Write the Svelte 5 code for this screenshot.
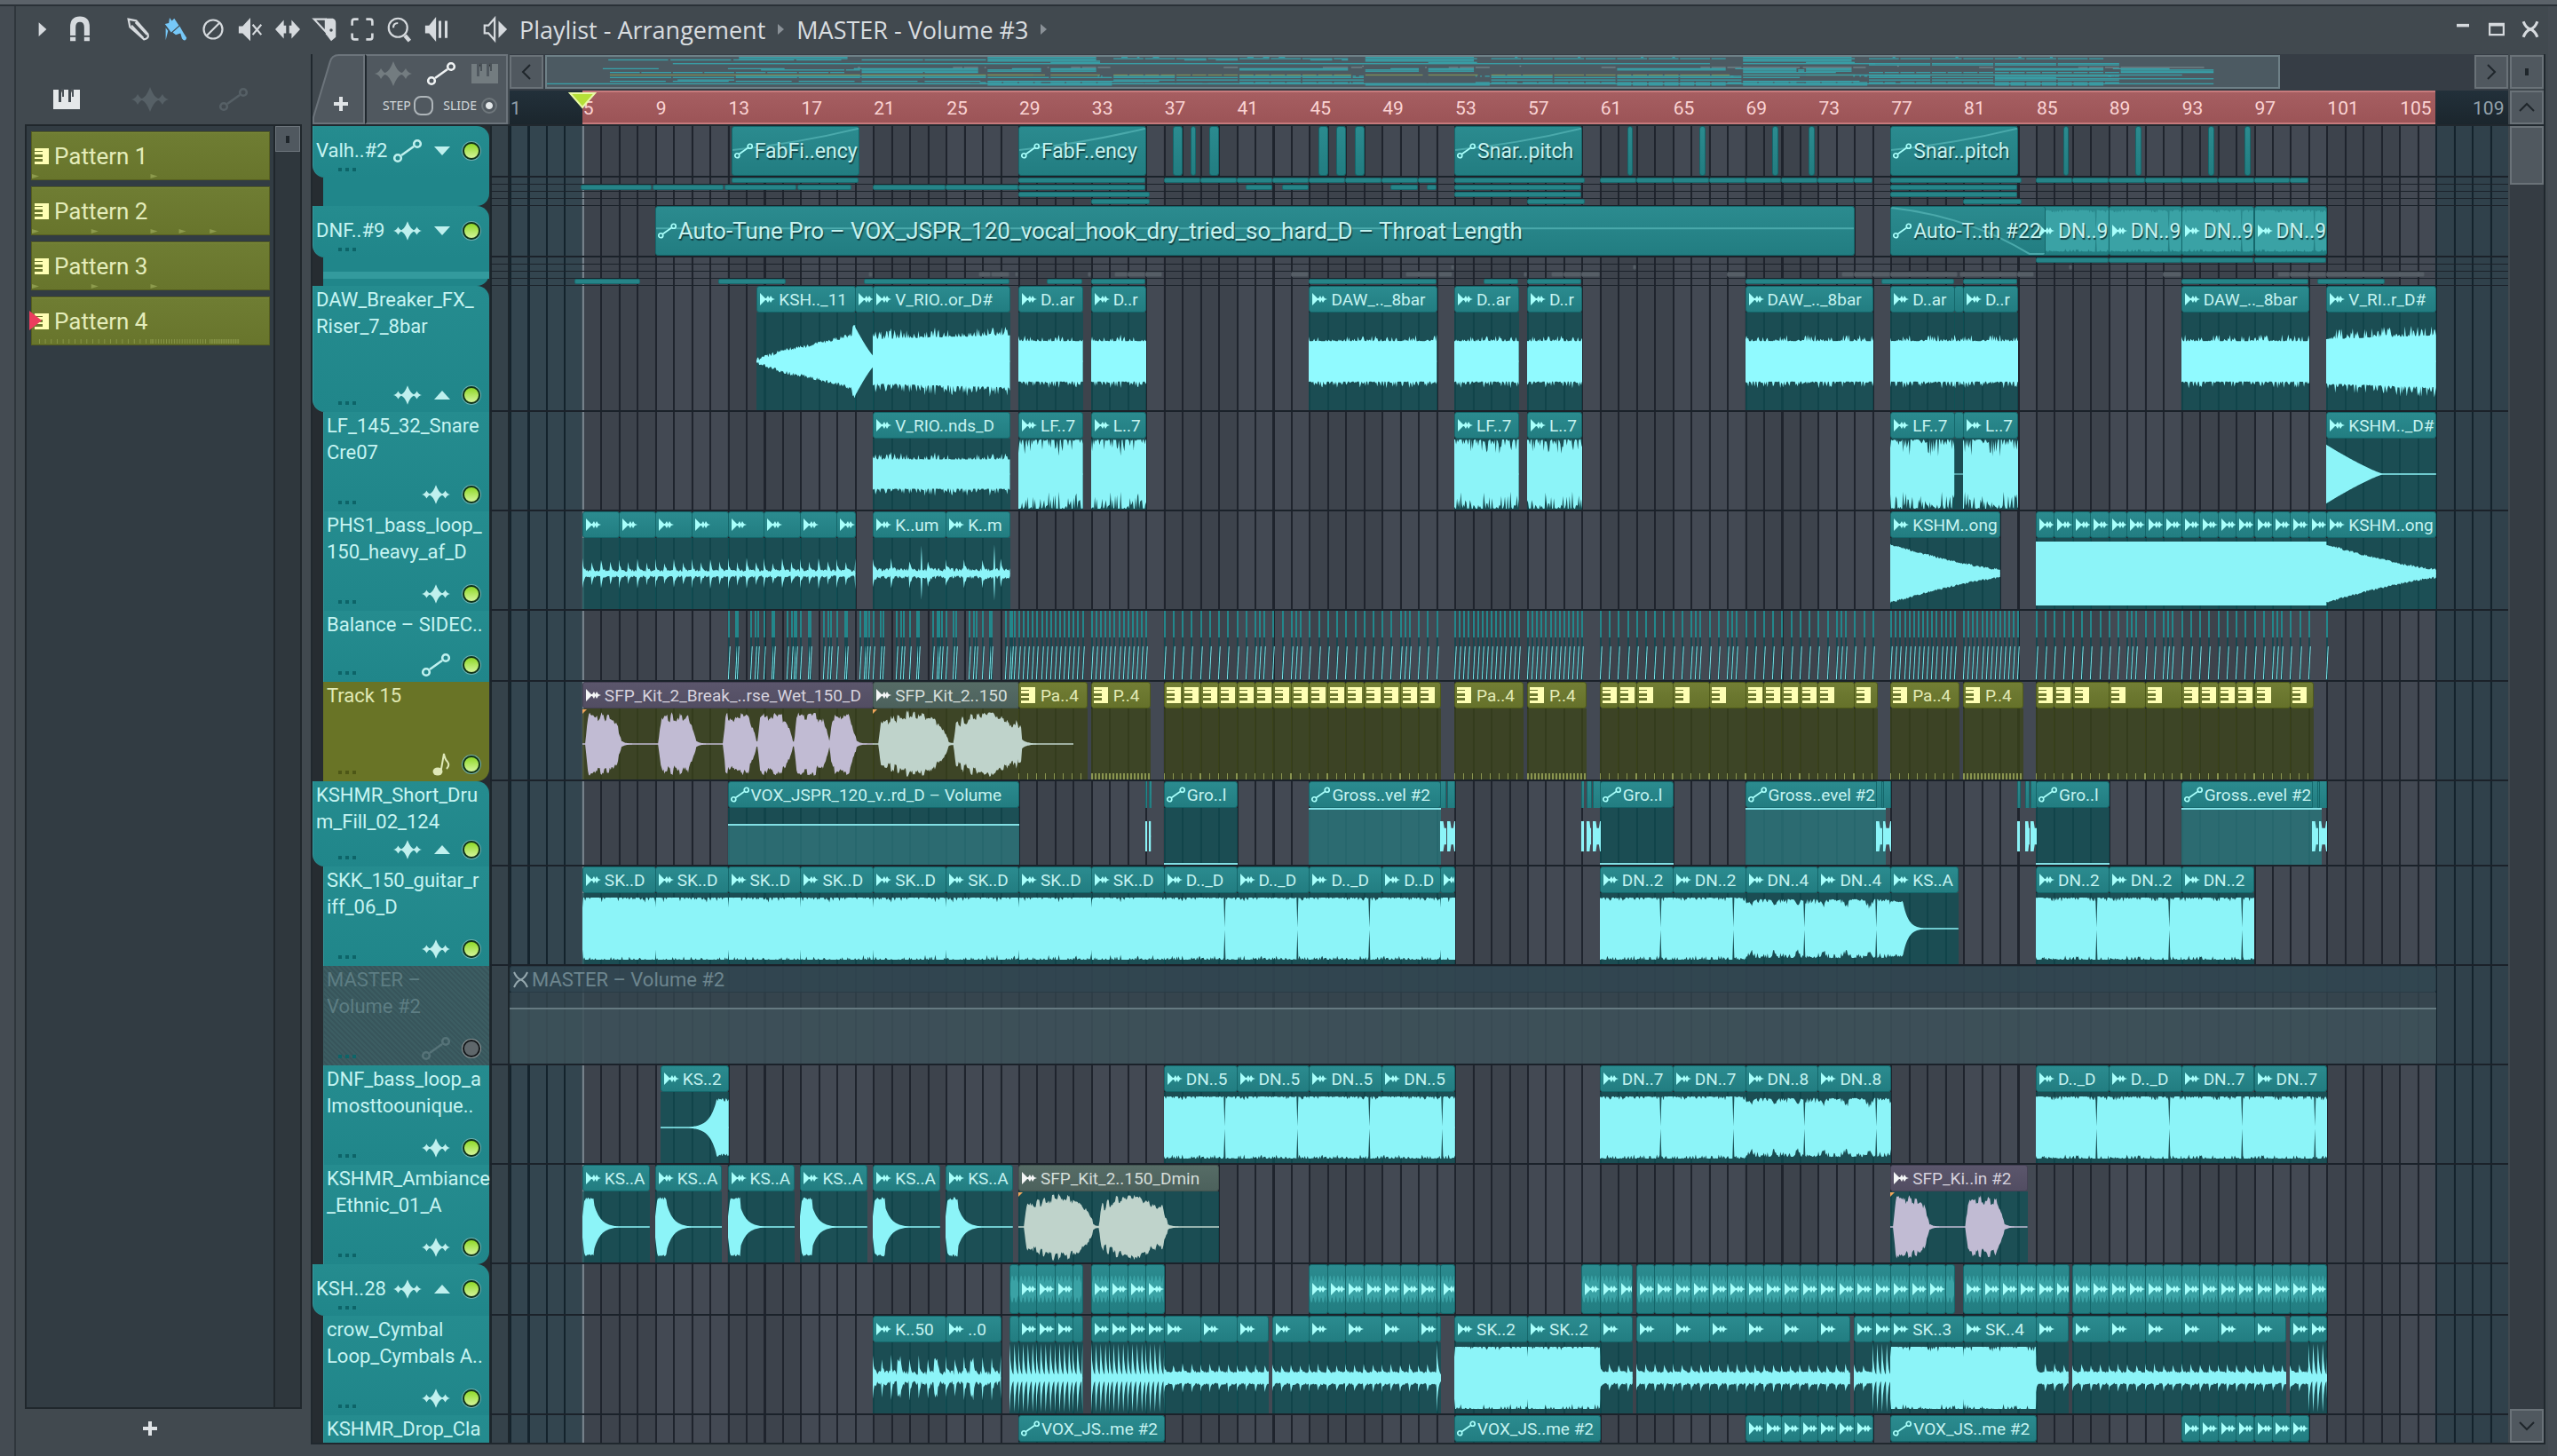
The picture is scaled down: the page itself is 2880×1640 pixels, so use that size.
<script>
  const BARS = 110;
  const pct = (n) => `${(n / BARS) * 100}%`;
  const frac = (n) => n - Math.floor(n);
  const rnd = (n) => frac(Math.sin(n * 127.1 + 311.7) * 43758.5453);

  const blob = (t, a, b) => {
    if (t < a) return 0;
    if (t > b) return 0.12 * Math.exp(-(t - b) * 5);
    return Math.min(1, (t - a) * 6, (b - t) * 2 + 0.25);
  };
  const grain = (t, n, base) => base + 0.22 * rnd(Math.floor(t * 6) + 7) + 0.1 * rnd(n);

  function level(kind, t, len, n) {
    const r = rnd(n);
    const p = t / len;
    switch (kind) {
      case 'mid': return 0.42 + r ** 4 * 0.14;
      case 'big': return 0.46 + p * 0.08 + r ** 3 * 0.22;
      case 'low': return 0.42 + r ** 4 * 0.22;
      case 'rise': return Math.min(0.8, p * 3) * 0.18 + 0.4 * p ** 1.6 + r * 0.08 + (p > 0.97 ? 0.16 : 0);
      case 'fall': return 0.62 * (1 - p) ** 1.2 + 0.1;
      case 'tall': return 1 - r ** 4 * 0.5;
      case 'fade': return 0.72 * (1 - p) ** 1.3 + 0.09 + r * 0.06;
      case 'drop': return Math.max(0.015, 0.85 * Math.max(0, 1 - p * 1.9) ** 1.2);
      case 'beat': return 0.05 + r * 0.07 + 0.34 * Math.exp(-frac(t) * 16) + 0.24 * Math.exp(-frac(t + 0.5) * 16);
      case 'thump': return 0.06 + r * 0.1 + 0.28 * Math.exp(-frac(t) * 14) + (Math.abs(t - 2.65) < 0.04 ? 0.7 : 0);
      case 'solid': return 0.92;
      case 'guitar': return frac(t / 4) < 0.01 ? 0.6 : 0.9 - r ** 8 * 0.15;
      case 'loop': return Math.abs(t - 3.3) < 0.03 ? 0.03 : 0.9 - r ** 4 * 0.12;
      case 'wavy': return Math.abs(t - 3.2) < 0.03 ? 0.03 : 0.85 - r ** 3 * 0.15 - 0.14 * Math.max(0, Math.sin(t * 5)) ** 4;
      case 'tail': return t < 0.7 ? 0.82 - r * 0.08 : Math.max(0.012, 0.75 * Math.exp(-(t - 0.7) * 3.5));
      case 'hit': return t < 0.12 ? 0.3 + t * 4.5 : t < 0.65 ? 0.86 - r * 0.08 : Math.max(0.012, 0.62 * Math.exp(-(t - 0.65) * 2.8));
      case 'swell': return t > 3 ? 0.85 - r * 0.1 : Math.max(0.012, 0.8 * Math.exp((t - 3.05) * 2.6));
      case 'kick': return 0.14 + r * 0.06 + 0.22 * Math.exp(-frac(t * 2) * 8);
      case 'spike': return 0.04 + 0.95 * Math.exp(-frac(t * 4) * 3.6);
      case 'hats': return 0.08 + r * 0.14 + 0.45 * Math.exp(-frac(t * 2) * 9) + (Math.abs(frac(t / 2) - 0.7) < 0.04 ? 0.35 : 0);
      case 'ghost': return 0.25 + 0.35 * Math.abs(Math.sin(t * 14));
      case 'voxA': return 0.012 + grain(t, n, 0.6) * Math.max(blob(t, 0.15, 2.1), blob(t, 4.15, 6.2), blob(t, 7.7, 9.5), blob(t, 9.6, 11.5), blob(t, 11.6, 13.5), blob(t, 13.55, 15));
      case 'voxB': return 0.012 + (grain(t, n, 0.55) + 0.14 * Math.sin(t * 1.6 - 2)) * Math.max(blob(t, 0.3, 4.1), blob(t, 4.4, 8.2));
      case 'voxC': return 0.012 + grain(t, n, 0.6) * Math.max(blob(t, 0.15, 2.1), blob(t, 4.1, 6.2));
      case 'voxEnd': return t < 0.2 ? 0.55 - r * 0.1 : 0.012 + 0.12 * Math.exp(-(t - 0.2) * 4);
      case 'burst': return frac(t * 3) < 0.45 ? 0.55 : 0.3;
      default: return 0;
    }
  }

  function wavePath(kind, start, len) {
    const steps = Math.max(6, Math.round(len * 20));
    const top = [];
    const bottom = [];
    for (let i = 0; i <= steps; i++) {
      const t = (i / steps) * len;
      const up = level(kind, t, len, i + start * 3);
      const down = level(kind, t, len, i + start * 3 + 991);
      top.push(`${i} ${(50 - up * 50).toFixed(1)}`);
      bottom.unshift(`${i} ${(50 + down * 50).toFixed(1)}`);
    }
    return { steps, d: `M${top.join('L')}L${bottom.join('L')}Z` };
  }

  // clip: start bar, end bar, label, waveform kind, extra options
  const c = (s, e, label = '', wave = '', opt = {}) => ({ s, e, label, wave, icon: 'clip', tone: 'teal', ...opt });
  const auto = (s, e, label, fill, opt = {}) => c(s, e, label, '', { icon: 'auto', fill, ...opt });
  const run = (s, e, step, label, wave, opt) => {
    const out = [];
    for (let b = s; b < e - 0.01; b += step) out.push(c(b, Math.min(b + step, e), label, wave, opt));
    return out;
  };
  const bare = (...pairs) => pairs.map(([s, e]) => ({ s, e }));
  const steps = (s, e, n = 2) => {
    const out = [];
    for (let b = s; b < e; b += n) out.push({ s: b, e: Math.min(b + n, e) });
    return out;
  };
  const pat = (s, e, label = '') => c(s, e, label, '', { icon: 'piano', tone: 'olive', notes: true });
  const pats = (...edges) => edges.slice(1).map((e, i) => pat(edges[i], e));

  const valhTicks = [[37.5, 38], [38.5, 38.75], [39.5, 40], [45.5, 46], [46.5, 47], [47.5, 48]]
    .concat([62.5, 66.5, 70.5, 72.5, 86.5, 90.5, 94.5, 96.5].map((b) => [b, b + 0.28]));

  const sidechain = [];
  for (const base of [13, 17, 21, 25])
    for (const o of [0, 0.4, 0.52, 1.25, 1.5, 1.65, 2, 2.4, 2.5, 3.25, 3.5, 3.62, 3.75])
      if (base + o < 28.8) sidechain.push(base + o);
  for (const base of [29, 53, 77]) {
    for (let o = 0; o <= 3.6; o += 0.25) sidechain.push(base + o);
    for (let o = 4; o <= 7.1; o += 0.25) sidechain.push(base + o);
  }
  for (const base of [37, 61, 85]) {
    for (let o = 0; o < 15.3; o += 0.5) sidechain.push(base + o);
    for (const o of [5.25, 7.25, 13.25]) sidechain.push(base + o);
  }
  sidechain.push(101);

  const tracks = [
    {
      name: 'Valh..#2', h: 58, kind: 'auto', parent: true, caret: 'down', compact: true, rt: true, rb: true,
      clips: [
        auto(13.2, 20.2, 'FabFi..ency', null, { ramp: true }), auto(29, 36, 'FabF..ency', null, { ramp: true }),
        auto(53, 60, 'Snar..pitch', null, { ramp: true }), auto(77, 84, 'Snar..pitch', null, { ramp: true }),
        ...valhTicks.map(([s, e]) => c(s, e, '', '', { icon: '' })),
      ],
      minis: [
        [...bare([13.2, 20.2], [29, 36]), ...steps(37, 52), ...bare([53, 60.2]), ...steps(61, 76), ...bare([77, 84.2]), ...steps(85, 100)],
        bare([4.9, 8.8], [8.85, 12.8], [12.85, 16.8], [16.85, 19.8], [21, 25], [25, 29], [29, 36], [41.5, 43], [43.5, 45], [49.5, 51], [51.5, 52], [53, 60], [77, 84]),
        bare([29, 36.25], [53, 60], [77, 84]),
        bare([33, 36.25], [57, 60.2], [81, 84.2]),
      ],
    },
    {
      name: 'DNF..#9', h: 58, kind: 'wave', parent: true, caret: 'down', compact: true, rt: true, rb: true, stripe: true,
      clips: [
        auto(9, 75, 'Auto-Tune Pro – VOX_JSPR_120_vocal_hook_dry_tried_so_hard_D – Throat Length', null, { flat: true }),
        c(85, 89, 'DN..9', 'loop'), c(89, 93, 'DN..9', 'loop'), c(93, 97, 'DN..9', 'loop'), c(97, 101, 'DN..9', 'loop'),
        auto(77, 85.5, 'Auto-T..th #22', null, { fall: true }),
      ],
      minis: [
        steps(85, 101, 4),
        bare([52.8, 53], [62.8, 63], [86.8, 87]).map((m) => ({ ...m, grey: true })),
        bare([20.75, 21], [26.8, 27.5], [27.5, 28.5], [28.8, 29], [32.8, 33], [34.3, 35], [35, 36], [36, 36.9], [44, 45], [50.3, 52], [52.1, 52.9], [56.8, 57], [58.3, 59], [59, 60], [60, 61], [68, 69], [74.3, 75], [75, 76], [76, 77], [77, 80.7], [80.8, 84], [84, 84.9], [92, 93], [98.3, 99], [99, 100], [100, 101], [101, 106.4]).map((m) => ({ ...m, grey: true })),
        bare([4.55, 8.2], [12.5, 16.2], [20.5, 28.5], [30.55, 32.5], [33, 36], [45, 52], [54.6, 56.5], [57, 60], [69, 76], [76.5, 80.5], [81, 84], [93, 100], [100.5, 104.2]),
      ],
    },
    {
      name: 'DAW_Breaker_FX_\nRiser_7_8bar', h: 142, kind: 'wave', parent: true, caret: 'up', rt: true,
      clips: [
        c(14.6, 20, 'KSH.._11', 'rise'), c(20, 21, '', 'fall'), c(21, 28.5, 'V_RIO..or_D#', 'big'),
        c(29, 32.5, 'D..ar', 'mid'), c(33, 36, 'D..r', 'mid'), c(45, 52, 'DAW_.._8bar', 'mid'),
        c(53, 56.5, 'D..ar', 'mid'), c(57, 60, 'D..r', 'mid'), c(69, 76, 'DAW_.._8bar', 'mid'),
        c(77, 80.5, 'D..ar', 'mid'), c(80.5, 81, '', 'mid', { icon: '' }), c(81, 84, 'D..r', 'mid'),
        c(93, 100, 'DAW_.._8bar', 'mid'), c(101, 107, 'V_RI..r_D#', 'big'),
      ],
    },
    {
      name: 'LF_145_32_Snare\nCre07', h: 112, kind: 'wave',
      clips: [
        c(21, 28.5, 'V_RIO..nds_D', 'low'), c(29, 32.5, 'LF..7', 'tall'), c(33, 36, 'L..7', 'tall'),
        c(53, 56.5, 'LF..7', 'tall'), c(57, 60, 'L..7', 'tall'), c(77, 80.5, 'LF..7', 'tall'),
        c(80.5, 81, '', 'line', { icon: '' }), c(81, 84, 'L..7', 'tall'), c(101, 107, 'KSHM.._D#', 'drop'),
      ],
    },
    {
      name: 'PHS1_bass_loop_\n150_heavy_af_D', h: 112, kind: 'wave',
      clips: [
        ...run(5, 20, 2, '', 'beat'), c(21, 25, 'K..um', 'thump'), c(25, 28.5, 'K..m', 'thump'),
        c(77, 83, 'KSHM..ong', 'fade'), ...run(85, 101, 1, '', 'solid'), c(101, 107, 'KSHM..ong', 'fade'),
      ],
    },
    { name: 'Balance – SIDEC..', h: 80, kind: 'auto', clips: [], ticks: sidechain },
    {
      name: 'Track 15', h: 112, kind: 'note', olive: true, rb: true,
      clips: [
        c(5, 21, 'SFP_Kit_2_Break_..rse_Wet_150_D', 'voxA', { tone: 'plum', body: 'olive', mark: true }),
        c(21, 29, 'SFP_Kit_2..150', 'voxB', { tone: 'sage', body: 'olive', mark: true }),
        pat(29, 32.75, 'Pa..4'), pat(33, 36.25, 'P..4'),
        c(29, 32, '', 'voxEnd', { icon: '', tone: 'sage', over: true }),
        ...pats(37, 38, 39, 40, 41, 42, 43, 44, 45, 46, 47, 48, 49, 50, 51, 52.2),
        pat(53, 56.75, 'Pa..4'), pat(57, 60.25, 'P..4'),
        ...pats(61, 62, 63, 65, 67, 69, 70, 71, 72, 73, 75, 76.25),
        pat(77, 80.75, 'Pa..4'), pat(81, 84.25, 'P..4'),
        ...pats(85, 86, 87, 89, 91, 93, 94, 95, 96, 97, 99, 100.25),
      ],
    },
    {
      name: 'KSHMR_Short_Dru\nm_Fill_02_124', h: 96, kind: 'wave', parent: true, caret: 'up', rt: true,
      clips: [
        auto(13, 29, 'VOX_JSPR_120_v..rd_D – Volume', 72),
        auto(37, 41, 'Gro..l', 0), auto(45, 52.2, 'Gross..vel #2', 100), auto(61, 65, 'Gro..l', 0),
        auto(69, 76.7, 'Gross..evel #2', 100), auto(85, 89, 'Gro..l', 0), auto(93, 100.7, 'Gross..evel #2', 100),
        ...[[36, 36.05], [36.2, 36.26], [52.2, 52.5], [52.6, 53], [60, 60.1], [60.3, 60.5], [60.6, 61], [76.2, 76.5], [76.6, 77], [84, 84.1], [84.4, 84.6], [84.7, 85], [100.2, 100.5], [100.6, 101]].map(([s, e]) => c(s, e, '', 'burst', { icon: '', thin: true })),
      ],
    },
    {
      name: 'SKK_150_guitar_r\niff_06_D', h: 112, kind: 'wave',
      clips: [
        ...run(5, 37, 4, 'SK..D', 'guitar'), ...run(37, 49, 4, 'D.._D', 'loop'), c(49, 52.2, 'D..D', 'loop'), c(52.2, 53, '', 'guitar'),
        c(61, 65, 'DN..2', 'loop'), c(65, 69, 'DN..2', 'loop'), c(69, 73, 'DN..4', 'wavy'), c(73, 77, 'DN..4', 'wavy'),
        c(77, 80.7, 'KS..A', 'tail'), ...run(85, 97, 4, 'DN..2', 'loop'),
      ],
    },
    { name: 'MASTER –\nVolume #2', h: 112, kind: 'auto', muted: true, clips: [c(1, 107, 'MASTER – Volume #2', '', { icon: 'cross', tone: 'mute', fill: 79 })] },
    {
      name: 'DNF_bass_loop_a\nlmosttoounique..', h: 112, kind: 'wave',
      clips: [
        c(9.3, 13, 'KS..2', 'swell'), ...run(37, 53, 4, 'DN..5', 'loop'), ...run(61, 69, 4, 'DN..7', 'loop'),
        ...run(69, 77, 4, 'DN..8', 'wavy'), ...run(85, 93, 4, 'D.._D', 'loop'), ...run(93, 101, 4, 'DN..7', 'loop'),
      ],
    },
    {
      name: 'KSHMR_Ambiance\n_Ethnic_01_A', h: 112, kind: 'wave', rb: true,
      clips: [
        ...[5, 9, 13, 17, 21, 25].map((b) => c(b, b + 3.65, 'KS..A', 'hit')),
        c(29, 40, 'SFP_Kit_2..150_Dmin', 'voxB', { tone: 'sage', mark: true }),
        c(77, 84.5, 'SFP_Ki..in #2', 'voxC', { tone: 'plum', mark: true }),
      ],
    },
    {
      name: 'KSH..28', h: 58, kind: 'wave', parent: true, caret: 'up', compact: true, rt: true,
      clips: [
        c(28.5, 29, '', 'ghost', { icon: '' }), ...run(29, 32, 1, '', 'ghost'), c(32, 32.5, '', 'ghost', { icon: '' }),
        ...run(33, 37, 1, '', 'ghost'), ...run(45, 52, 1, '', 'ghost'), c(52, 52.2, '', 'ghost', { icon: '' }), c(52.2, 53, '', 'ghost'),
        ...run(60, 62.75, 1, '', 'ghost'), ...run(63, 80, 1, '', 'ghost'), c(80, 80.5, '', 'ghost', { icon: '' }),
        ...run(81, 86.8, 1, '', 'ghost'), ...run(87, 101, 1, '', 'ghost'),
      ],
    },
    {
      name: 'crow_Cymbal\nLoop_Cymbals A..', h: 112, kind: 'wave',
      clips: [
        c(21, 25, 'K..50', 'hats'), c(25, 28, '..0', 'hats'), c(28.5, 29, '', 'spike', { icon: '' }), ...run(29, 32, 1, '', 'spike'), c(32, 32.5, '', 'spike', { icon: '' }),
        ...run(33, 37, 1, '', 'spike'), ...run(37, 42.75, 2, '', 'kick'), ...run(43, 51, 2, '', 'kick'), c(51, 52, '', 'kick'), c(52, 52.2, '', 'spike', { icon: '' }),
        ...run(53, 61, 4, 'SK..2', 'guitar'), c(61, 62.75, '', 'kick'), ...run(63, 74.75, 2, '', 'kick'),
        c(75, 76, '', 'kick'), c(76, 77, '', 'spike'), c(77, 81, 'SK..3', 'guitar'), c(81, 85, 'SK..4', 'guitar'),
        c(85, 86.75, '', 'kick'), ...run(87, 98.75, 2, '', 'kick'), c(99, 100, '', 'kick'), c(100, 101, '', 'spike'),
      ],
    },
    {
      name: 'KSHMR_Drop_Cla', h: 112, kind: 'wave', last: true,
      clips: [
        auto(29, 37, 'VOX_JS..me #2', 40), auto(53, 61, 'VOX_JS..me #2', 40), ...run(69, 76, 1, '', 'kick'),
        auto(77, 85, 'VOX_JS..me #2', 40), ...run(93, 100, 1, '', 'kick'),
      ],
    },
  ];

  const overview = [];
  let lane = 0;
  for (const t of tracks) {
    for (const k of t.clips) if (!t.muted) overview.push({ x: k.s - 1, w: k.e - k.s, y: lane, olive: t.olive });
    lane += 1;
    for (const m of t.minis ?? []) {
      for (const k of m) overview.push({ x: k.s - 1, w: k.e - k.s, y: lane, grey: k.grey });
      lane += 1;
    }
  }
  overview.push({ x: 76, w: 28, y: 14 }, { x: 92, w: 14, y: 17 }, { x: 0, w: 106, y: 21 });

  const ruler = Array.from({ length: 28 }, (_, i) => 1 + i * 4);
  const bars = Array.from({ length: BARS }, (_, i) => i);
  const patterns = [
    { name: 'Pattern 1', marks: [0, 50] },
    { name: 'Pattern 2', marks: [0, 25, 50, 62, 75] },
    { name: 'Pattern 3', marks: [0, 25, 50] },
    { name: 'Pattern 4', marks: [] },
  ];
  const tools = ['pencil', 'brush', 'ban', 'mute', 'slip', 'slice', 'select', 'zoom', 'play'];
  let active = $state(3);
</script>

{#snippet icon(name)}
  {#if name === 'wave'}
    <svg class="i-wave" viewBox="0 0 42 28"><path d="M0 14Q5 13 7 8Q10 13 12 13Q17 11 21 0Q25 11 30 13Q32 13 35 8Q37 13 42 14Q37 15 35 20Q32 15 30 15Q25 17 21 28Q17 17 12 15Q10 15 7 20Q5 15 0 14Z" fill="currentColor" /></svg>
  {:else if name === 'auto'}
    <svg class="i-auto" viewBox="0 0 32 26" fill="none" stroke="currentColor" stroke-width="2.6"><circle cx="5" cy="21" r="3.8" /><circle cx="27" cy="5" r="3.8" /><path d="M9 18L23 8" /></svg>
  {:else if name === 'piano'}
    <svg class="i-piano" viewBox="0 0 30 22"><path d="M0 0H6V14H9V0H17V14H20V0H30V22H0Z" fill="currentColor" /><path d="M9 0H11V8M20 0H22V8" stroke="#4a5258" stroke-width="2" /></svg>
  {:else if name === 'note'}
    <svg class="i-note" viewBox="0 0 20 26"><ellipse cx="6" cy="21" rx="5.5" ry="4.5" fill="currentColor" /><path d="M9.500 21L13 1Q14 7 17 10Q20 14 16 18" fill="none" stroke="currentColor" stroke-width="2" /></svg>
  {:else if name === 'clip'}
    <svg class="i-clip" viewBox="0 0 17 14"><path d="M0 0L6 6H7L9 3L10.500 6L12 3L14 6L17 7L14 8L12 11L10.500 8L9 11L7 8H6L0 14Z" fill="currentColor" /></svg>
  {:else if name === 'cross'}
    <svg class="i-clip" viewBox="0 0 17 17"><path d="M1 0Q4 7 8.500 8.500Q13 7 16 0M1 17Q4 10 8.500 8.500Q13 10 16 17" stroke="currentColor" stroke-width="2" fill="none" /></svg>
  {:else if name === 'keys'}
    <svg class="i-keys" viewBox="0 0 16 18"><path d="M0 0H16V18H0V15H9V12H0V10H9V7H0V4H9V3H0Z" fill="currentColor" /></svg>
  {/if}
{/snippet}

{#snippet toolIcon(name)}
  <svg class="i-tool" viewBox="0 0 32 32" fill="none" stroke="currentColor" stroke-width="2.5">
    {#if name === 'pencil'}
      <path d="M3 3L13 5L28 22Q30 28 23 29L5 13ZM7 11L22 27M12 7L27 23" />
    {:else if name === 'brush'}
      <path d="M8 1L11 5L14 2L20 11L10 20L2 9L7 8ZM12 20L21 12L25 19L30 27Q28 33 24 28L22 21L16 23Z" fill="currentColor" stroke="none" /><path d="M3 14V30L6 18" fill="currentColor" stroke="none" />
    {:else if name === 'ban'}
      <circle cx="16" cy="16" r="12" /><path d="M8 24L24 8" />
    {:else if name === 'mute'}
      <path d="M1 12H6L16 1V31L6 21H1Z" fill="currentColor" stroke="none" /><path d="M19 10L30 23M30 10L19 23" />
    {:else if name === 'slip'}
      <path d="M0 16L11 4V11H14V21H11V28ZM32 16L21 4V11H18V21H21V28Z" fill="currentColor" stroke="none" />
    {:else if name === 'slice'}
      <path d="M2 3L17 19V3Z" /><path d="M17 2H26Q30 3 30 8V26L24 31L17 22Z" fill="currentColor" stroke="none" /><circle cx="24" cy="17" r="2" fill="#41494f" stroke="none" />
    {:else if name === 'select'}
      <path d="M3 11V6Q3 3 6 3H11M21 3H26Q29 3 29 6V11M29 21V26Q29 29 26 29H21M11 29H6Q3 29 3 26V21" stroke-width="3" />
    {:else if name === 'zoom'}
      <circle cx="14" cy="14" r="12" /><path d="M23 24L29 31" stroke-width="5" /><path d="M8 14Q8 8 14 8" />
    {:else if name === 'play'}
      <path d="M1 11H6L15 0V32L6 21H1Z" fill="currentColor" stroke="none" /><path d="M20 5V27M28 5V27" stroke-width="3.5" />
    {:else if name === 'magnet'}
      <path d="M7 31V13Q7 3 16 3Q25 3 25 13V31" stroke-width="7" /><path d="M3 25H11M21 25H29" stroke="#41494f" stroke-width="2" />
    {:else if name === 'speaker'}
      <path d="M2 11H7L15 2V30L7 21H2Z" /><path d="M20 5L31 16L20 27Z" fill="currentColor" stroke="none" />
    {:else if name === 'caret'}
      <path d="M11 7L21 16L11 25Z" fill="currentColor" stroke="none" />
    {:else if name === 'minimize'}
      <path d="M8 11H24" stroke-width="4" />
    {:else if name === 'maximize'}
      <path d="M7 9H25V23H7Z" /><path d="M7 10H25" stroke-width="4" />
    {:else if name === 'close'}
      <path d="M7 6Q10 14 16 16Q22 14 25 6M7 26Q10 18 16 16Q22 18 25 26" stroke-width="3.5" />
    {/if}
  </svg>
{/snippet}

{#snippet wave(kind, s, len)}
  {@const w = wavePath(kind, s, len)}
  <svg class="wave" viewBox="0 0 {w.steps} 100" preserveAspectRatio="none">
    <path d={w.d} fill="currentColor" />
    <path d="M0 50H{w.steps}" stroke="currentColor" vector-effect="non-scaling-stroke" />
  </svg>
{/snippet}

<div class="window">
  <header class="toolbar">
    <button class="tool" aria-label="Menu">{@render toolIcon('caret')}</button>
    <button class="tool" aria-label="Snap">{@render toolIcon('magnet')}</button>
    <div class="tools">
      {#each tools as t}
        <button class="tool" class:on={t === 'brush'} aria-label={t}>{@render toolIcon(t)}</button>
      {/each}
    </div>
    <button class="tool" aria-label="Preview">{@render toolIcon('speaker')}</button>
    <nav class="crumbs">
      <a href="#playlist">Playlist - Arrangement</a><i></i>
      <a href="#master">MASTER - Volume #3</a><i></i>
    </nav>
    <div class="win">
      {#each ['minimize', 'maximize', 'close'] as b}<button aria-label={b}>{@render toolIcon(b)}</button>{/each}
    </div>
  </header>

  <div class="content">
    <aside class="picker">
      <div class="tabs">
        <button aria-label="Patterns" class="sel">{@render icon('piano')}</button>
        <button aria-label="Audio">{@render icon('wave')}</button>
        <button aria-label="Automation">{@render icon('auto')}</button>
      </div>
      <div class="picker-box">
        <div class="patterns">
          {#each patterns as p, i}
            <button class="pattern" class:active={active === i} onclick={() => (active = i)}>
              {@render icon('keys')}<span>{p.name}</span>
              <svg class="marks" viewBox="0 0 100 6" preserveAspectRatio="none">
                {#each p.marks as m}<path d="M{m} 0L{m + 3} 3L{m} 6Z" />{/each}
                {#if i === 3}{#each bars as b}<path d="M{b < 20 ? b * 2.5 + 3 : b < 42 ? 50 + (b - 20) * 1.1 : 75 + (b - 42) * 0.6} 0v6h.3v-6z" class:hide={b > 62} />{/each}{/if}
              </svg>
            </button>
          {/each}
        </div>
        <div class="picker-scroll"><button aria-label="Options"><b></b></button></div>
      </div>
      <button class="add" aria-label="Add pattern"><svg viewBox="0 0 16 16"><path d="M8 0V16M0 8H16" stroke="currentColor" stroke-width="4" /></svg></button>
    </aside>

    <section class="playlist">
      <div class="head-row">
        <div class="corner">
          <button class="add-track" aria-label="Add track">
            <svg class="tabshape" viewBox="0 0 60 80" preserveAspectRatio="none"><path d="M1 79V72L20 9Q22 1 30 1H59V79Z" fill="#50585f" stroke="#6c747b" stroke-width="2" /></svg>
            <svg class="plus" viewBox="0 0 16 16"><path d="M8 0V16M0 8H16" stroke="currentColor" stroke-width="4" /></svg>
          </button>
          <div class="modes">
            <div class="mode-icons">
              <button aria-label="Clips">{@render icon('wave')}</button>
              <button aria-label="Automation" class="sel">{@render icon('auto')}</button>
              <button aria-label="Patterns">{@render icon('piano')}</button>
            </div>
            <div class="mode-toggles">
              <label>STEP <input type="checkbox" /></label>
              <label>SLIDE <input type="radio" checked /></label>
            </div>
          </div>
        </div>
        <div class="time">
          <div class="mini-row">
            <button class="sq" aria-label="Scroll left"><svg viewBox="0 0 12 18"><path d="M10 1L2 9L10 17" /></svg></button>
            <div class="minimap">
              <div class="thumb">
                <svg viewBox="0 0 110 24" preserveAspectRatio="none">
                  {#each overview as o}<rect x={o.x} y={o.y} width={Math.max(0.1, o.w - 0.1)} height="0.9" class:olive={o.olive} class:grey={o.grey} />{/each}
                </svg>
              </div>
            </div>
            <button class="sq" aria-label="Scroll right"><svg viewBox="0 0 12 18"><path d="M2 1L10 9L2 17" /></svg></button>
          </div>
          <div class="ruler">
            <div class="loop" style:left={pct(4)} style:width={pct(102)}></div>
            {#each ruler as n}<span class:out={n < 5 || n > 106} style:left={pct(n - 1)}>{n}</span>{/each}
            <svg class="playhead" style:left={pct(4)} viewBox="0 0 32 20"><path d="M2 2H30L16 18Z" fill="#b5e038" stroke="#e9f9a8" stroke-width="2" /></svg>
          </div>
        </div>
        <div class="side-btns">
          <button class="sq" aria-label="Options"><b></b></button>
          <button class="sq" aria-label="Scroll up"><svg viewBox="0 0 18 12"><path d="M1 10L9 2L17 10" /></svg></button>
        </div>
      </div>

      <div class="tracks-wrap">
        <div class="tracks">
          <div class="grid-bg">
            <svg viewBox="0 0 110 1" preserveAspectRatio="none">
              {#each bars as b}
                <rect x={b} y="0" width="1.01" height="1" fill={b < 4 ? '#33454f' : b > 105 ? '#30414b' : Math.floor(b / 4) % 2 ? '#3d434c' : '#434953'} />
              {/each}
              {#each bars as b}<rect x={b} y="0" width="0.1" height="1" fill={b < 4 || b > 105 ? '#14232c' : '#1f242d'} shape-rendering="crispEdges" />{/each}
              <rect x="4" y="0" width="0.1" height="1" fill="#7b8790" />
            </svg>
          </div>
          {#each tracks as t}
            <div class="row">
              <div class="head" class:parent={t.parent} class:olive={t.olive} class:muted={t.muted} class:rt={t.rt} class:rb={t.rb}>
                <div class="plate" class:compact={t.compact} style:height="{t.h}px">
                  <span class="name">{t.name}</span>
                  <div class="ctl">
                    <button class="dots" aria-label="Track options"><b></b><b></b><b></b></button>
                    <span class="kind">{@render icon(t.kind)}</span>
                    {#if t.caret}<button class="caret {t.caret}" aria-label="Fold"></button>{/if}
                    <input class="led" type="checkbox" checked={!t.muted} aria-label="Enable {t.name}" />
                  </div>
                </div>
                {#if t.minis}<div class="rest">{#if t.stripe}<i></i>{/if}</div>{/if}
              </div>
              <div class="lanes">
                <div class="lane" class:last={t.last} style:height="{t.h}px">
                  <div class="field">
                    {#each t.clips as k}
                      <div
                        class="clip {k.tone} {k.body ? 'on-' + k.body : ''}"
                        class:full={t.compact}
                        class:long={k.flat}
                        class:thin={k.thin}
                        class:over={k.over}
                        class:bright={t.h > 140}
                        style:left={pct(k.s - 1)}
                        style:width="calc({pct(k.e - k.s)} + 1px)"
                      >
                        <div class="bar">
                          {#if k.icon}{@render icon(k.icon === 'piano' ? 'keys' : k.icon)}{/if}
                          {#if k.label}<span>{k.label}</span>{/if}
                          {#if t.compact && k.wave}<div class="under">{@render wave(k.wave, k.s, k.e - k.s)}</div>{/if}
                          {#if k.ramp || k.flat || k.fall}
                            <svg class="curve" viewBox="0 0 100 100" preserveAspectRatio="none"><path d={k.flat ? 'M0 45H100' : k.fall ? 'M0 2Q50 20 90 98H100' : 'M0 48Q50 35 100 3'} vector-effect="non-scaling-stroke" /></svg>
                          {/if}
                        </div>
                        {#if !t.compact}
                          <div class="body">
                            {#if k.wave}{@render wave(k.wave, k.s, k.e - k.s)}{/if}
                            {#if k.fill != null}<div class="fill" style:height="{k.fill}%"></div>{/if}
                            {#if k.mark}<i class="mark"></i>{/if}
                            {#if k.notes}<i class="notes" class:dense={k.label === 'P..4'}></i>{/if}
                          </div>
                        {/if}
                      </div>
                    {/each}
                    {#each t.ticks ?? [] as b}<i class="tick" style:left={pct(b - 1)}><svg viewBox="0 0 4 44" preserveAspectRatio="none"><path d="M0.500 43L3 0" /></svg></i>{/each}
                  </div>
                </div>
                {#each t.minis ?? [] as m}
                  <div class="mini">
                    <div class="field">
                      {#each m as k}<i class:grey={k.grey} style:left={pct(k.s - 1)} style:width={pct(k.e - k.s)}></i>{/each}
                    </div>
                  </div>
                {/each}
              </div>
            </div>
          {/each}
        </div>
        <div class="vscroll">
          <div class="vthumb"></div>
          <button class="sq" aria-label="Scroll down"><svg viewBox="0 0 18 12"><path d="M1 2L9 10L17 2" /></svg></button>
        </div>
      </div>
    </section>
  </div>
</div>

<style>
  :global(body) { background: #41494f; }
  .window {
    height: 100vh;
    box-sizing: border-box;
    display: flex;
    flex-direction: column;
    overflow: hidden;
    background: #41494f;
    border-top: 5px solid #5b6269;
    box-shadow: inset 0 2px 0 #2a3137, inset 16px 0 0 #444b52, inset 18px 0 0 #2f363c, inset -10px 0 0 #444b52;
    color: #dfe3e6;
    font: 24px Roboto, sans-serif;
  }
  button { border: 0; padding: 0; margin: 0; background: none; color: inherit; font: inherit; cursor: pointer; }
  svg { display: block; overflow: visible; }
  a { color: inherit; text-decoration: none; }

  .toolbar { display: flex; align-items: center; height: 56px; padding: 0 12px 0 27px; color: #d6dade; flex: none; }
  .tool { width: 42px; display: grid; place-items: center; }
  .tool.on { color: #76c8f8; }
  .tools { display: flex; margin: 0 24px; }
  .i-tool { width: 28px; height: 30px; }
  .crumbs { display: flex; align-items: center; gap: 14px; margin-left: 6px; font: 27px 'Open Sans', sans-serif; color: #d9dde0; }
  .crumbs i { border: 6px solid transparent; border-left: 7px solid #8a9197; border-right: 0; }
  .win { margin-left: auto; display: flex; gap: 6px; }
  .win button { width: 32px; }

  .content { flex: 1; display: flex; min-height: 0; gap: 10px; padding: 0 13px 13px 28px; }
  .picker { width: 312px; display: flex; flex-direction: column; flex: none; }
  .tabs { height: 79px; display: flex; align-items: center; padding: 23px 0 0 0; box-sizing: border-box; color: #566066; }
  .tabs button { width: 94px; display: grid; place-items: center; }
  .tabs .sel, .sel { color: #e4e8ea; }
  .i-wave { width: 42px; height: 28px; }
  .i-auto { width: 32px; height: 26px; }
  .i-piano { width: 30px; height: 22px; }
  .picker-box { flex: 1; display: flex; background: #323c43; border: 2px solid #20272c; box-sizing: border-box; }
  .patterns { flex: 1; display: flex; flex-direction: column; gap: 7px; padding: 6px 4px 0 5px; }
  .pattern {
    position: relative; height: 55px; display: flex; align-items: center; gap: 6px; padding-left: 3px; color: #e4ecba;
    background: linear-gradient(#6f7d33, #68752c); border: 1px solid #565f1f; box-shadow: inset 0 1px #7d8b3c; font-size: 26px;
  }
  .pattern .i-keys { color: #ffffb4; }
  .pattern.active::before { content: ''; position: absolute; left: -3px; top: 15px; border: 11px solid transparent; border-left: 14px solid #ec3d5e; border-right: 0; }
  .marks { position: absolute; left: 0; bottom: 1px; width: 100%; height: 5px; fill: #8d9b4d; }
  .hide { display: none; }
  .i-keys { width: 16px; height: 18px; flex: none; }
  .picker-scroll { width: 28px; background: #2f373d; border-left: 2px solid #20272c; }
  .picker-scroll button { width: 28px; height: 29px; background: #50585f; border: 1px solid #6c747b; display: grid; place-items: center; }
  button b { display: block; width: 4px; height: 8px; background: #1f262b; }
  .add { height: 40px; display: grid; place-items: center; margin-right: 30px; padding-top: 3px; box-sizing: border-box; }
  .add svg, .plus { width: 16px; height: 16px; }

  .playlist { flex: 1; min-width: 0; display: flex; flex-direction: column; border: 2px solid #20282e; border-top: 0; }
  .head-row { display: flex; height: 81px; flex: none; box-sizing: border-box; border-bottom: 2px solid #20282e; }
  .corner { width: 222px; display: flex; flex: none; }
  .add-track { position: relative; width: 59px; display: grid; place-items: center; padding: 32px 0 0 4px; box-sizing: border-box; }
  .add-track .plus { position: relative; }
  .tabshape { position: absolute; inset: 0; width: 100%; height: 100%; }
  .modes { flex: 1; background: #50585f; border: 2px solid #6c747b; border-left-color: #20282e; box-sizing: border-box; color: #737c80; margin-right: 2px; }
  .mode-icons { display: flex; height: 40px; align-items: center; justify-content: space-around; }
  .mode-icons .sel { color: #f0f3f4; }
  .mode-toggles { display: flex; justify-content: space-between; padding: 0 10px 0 18px; font: 14px/32px 'Noto Sans', sans-serif; color: #d4d9dc; }
  .mode-toggles label { display: flex; align-items: center; gap: 3px; }
  .mode-toggles input { appearance: none; margin: 0; width: 22px; height: 22px; border: 2px solid #aeb5b9; border-radius: 8px; box-sizing: border-box; }
  .mode-toggles input[type='radio'] { width: 18px; height: 18px; border-radius: 50%; border-color: #6f777c; background: radial-gradient(#e4e8ea 35%, transparent 45%); margin-left: 2px; }
  .time { flex: 1; min-width: 0; display: flex; flex-direction: column; }
  .mini-row { display: flex; height: 41px; background: #363d45; gap: 2px; padding-top: 1px; box-sizing: border-box; }
  .sq { width: 38px; height: 38px; flex: none; display: grid; place-items: center; background: #50585f; border: 2px solid #6a7278; box-sizing: border-box; }
  .sq svg { width: 12px; height: 18px; fill: none; stroke: #1f262b; stroke-width: 2; }
  .sq svg[viewBox='0 0 18 12'] { width: 18px; height: 12px; }
  .minimap { flex: 1; }
  .thumb { width: 90%; height: 38px; box-sizing: border-box; background: #4c5a62; border: 2px solid #6e8087; }
  .thumb svg { width: 100%; height: 100%; fill: #38a2aa; }
  .thumb .olive { fill: #7f9058; }
  .thumb .grey { fill: #75868c; }
  .ruler { position: relative; flex: 1; background: linear-gradient(#22303a, #1b262d); overflow: hidden; }
  .loop { position: absolute; top: 0; bottom: 0; background: linear-gradient(#a65e61, #9c5457); border: 2px solid #c67a7c; border-width: 2px 0; box-sizing: border-box; }
  .ruler span { position: absolute; top: 7px; padding-left: 1px; font-size: 21px; line-height: 26px; color: #fbd3d3; }
  .ruler .out { color: #93a1aa; }
  .playhead { position: absolute; top: 1px; width: 32px; height: 20px; margin-left: -16px; }
  .side-btns { width: 40px; display: flex; flex-direction: column; gap: 2px; padding: 1px 0 0 2px; box-sizing: border-box; }

  .tracks-wrap { flex: 1; min-height: 0; display: flex; }
  .tracks { flex: 1; min-width: 0; position: relative; overflow: hidden; background: #262d33; }
  .vscroll { width: 38px; margin-left: 2px; display: flex; flex-direction: column; justify-content: space-between; background: #353c43; }
  .vthumb { height: 66px; background: #50585f; border: 2px solid #6a7278; box-sizing: border-box; }
  .grid-bg { position: absolute; left: 222px; right: 0; top: 0; bottom: 0; }
  .grid-bg svg { width: 100%; height: 100%; }

  .row { position: relative; display: flex; }
  .head { width: 200px; flex: none; display: flex; flex-direction: column; background: #262c31; color: #c6f4f2; }
  .plate {
    margin-left: 12px; margin-right: 1px; box-sizing: border-box; padding: 1px 0 4px 3px; display: flex; flex-direction: column; justify-content: space-between;
    background: linear-gradient(#258c8f, #20868a); border-left: 1px solid #33989b;
  }
  .parent .plate { margin-left: 0; border-bottom-left-radius: 14px; }
  .rest { flex: 1; margin: 0 1px 0 12px; background: #20868a; padding-top: 16px; }
  .rest i { display: block; height: 8px; background: #339a9d; }
  .rt .plate { border-top-right-radius: 14px; }
  .rb .plate:last-child, .rb .rest { border-bottom-right-radius: 14px; }
  .olive .plate { background: #697426; border-color: #697426; color: #e0e9b4; }
  .muted .plate { background: repeating-linear-gradient(45deg, #3c5d62 0 2px, #38555b 2px 4px); border-color: #3c5d62; color: #5d7d83; }
  .name { font-size: 22px; line-height: 30px; white-space: pre; }
  .ctl { display: flex; align-items: center; gap: 14px; padding: 0 10px 0 13px; height: 30px; color: #bff0ee; }
  .olive .ctl { color: #dfe8b8; }
  .muted .ctl { color: #567378; }
  .parent .ctl { padding-left: 25px; }
  .dots { display: flex; gap: 4px; margin-right: auto; align-self: flex-end; padding-bottom: 4px; }
  .dots b { width: 4px; height: 4px; background: #0d6468; }
  .olive .dots b { background: #4d5716; }
  .ctl .i-wave { width: 32px; height: 24px; }
  .ctl .i-auto { width: 32px; height: 26px; }
  .ctl .i-note { width: 20px; height: 26px; }
  .caret { border: 9px solid transparent; width: 0; height: 0; }
  .caret.down { border-top: 10px solid #bff0ee; border-bottom: 0; }
  .caret.up { border-bottom: 10px solid #bff0ee; border-top: 0; }
  .led { appearance: none; margin: 0; width: 20px; height: 20px; flex: none; border: 2px solid #12351a; border-radius: 50%; box-sizing: border-box; background: linear-gradient(#8fd828, #d4f59a); box-shadow: 0 0 0 1px #6faeb0; }
  .led:not(:checked) { background: #5f676b; border-color: #15191c; box-shadow: 0 0 0 1px #8b9496; }
  .compact { flex-direction: row; align-items: center; justify-content: flex-start; position: relative; padding-bottom: 3px; }
  .compact .name { width: 80px; }
  .parent .compact .ctl { flex: 1; justify-content: flex-end; padding-left: 0; }
  .compact .dots { position: absolute; left: 28px; bottom: 3px; }

  .lanes { flex: 1; min-width: 0; }
  .lane, .mini { padding-left: 22px; background: linear-gradient(90deg, #1c252b 2px, #35424a 2px 20px, #1c252b 20px 22px, transparent 22px); box-sizing: border-box; position: relative; border-bottom: 2px solid #1b222a; }
  .mini { height: 8px; border-bottom-width: 1px; }
  .field { position: relative; height: 100%; }
  .clip { position: absolute; top: 0; bottom: 0; display: flex; flex-direction: column; overflow: hidden; color: #8cf4f8; }
  .bar {
    position: relative; height: 30px; flex: none; display: flex; align-items: center; box-sizing: border-box; padding-left: 2px;
    background: linear-gradient(#2b8b8f, #227d81); border: 1px solid #14676b; border-radius: 3px; color: #c4f2f0; white-space: nowrap; overflow: hidden; font-size: 19px;
  }
  .bar span { position: relative; z-index: 1; }
  .full .bar { height: 100%; font-size: 23px; text-shadow: 1px 2px 1px #123f42; }
  .long .bar { font-size: 26px; }
  .i-clip { width: 17px; height: 14px; margin: 0 4px 0 1px; flex: none; color: #a8fffb; position: relative; z-index: 1; }
  .bar .i-auto { width: 21px; height: 18px; margin-right: 2px; flex: none; color: #a8fffb; position: relative; z-index: 1; }
  .bar .i-keys { margin: 0 6px 0 0; color: #ffffb4; }
  .body { position: relative; flex: 1; min-height: 0; background: #0c5257b0; }
  .bright { color: #90faff; }
  .wave { position: absolute; inset: 1px 0; width: 100%; height: calc(100% - 2px); }
  .under { position: absolute; inset: 0; color: #3aa2a5; }
  .curve { position: absolute; inset: 0; width: 100%; height: 100%; fill: none; stroke: #4aa9ab; stroke-width: 2; }
  .clip.olive .bar { background: linear-gradient(#727e35, #65712a); border-color: #4f5a19; color: #e3ebb6; }
  .clip.olive .body, .on-olive .body { background: #3c4418c0; }
  .plum { color: #c1bbd3; }
  .plum .bar { background: linear-gradient(#5b566c, #524d62); border-color: #454154; color: #d6d2de; }
  .sage { color: #bfd3cb; }
  .sage .bar { background: linear-gradient(#566c66, #4c615c); border-color: #42544f; color: #d5deda; }
  .plum .i-clip, .sage .i-clip { color: #f4f6f6; }
  .mute .bar { background: #304650ee; border-color: #293b45; color: #6d858e; font-size: 22px; }
  .mute .i-clip { color: #94a7ad; height: 17px; }
  .mute .body { background: #33454ecc; }
  .fill { position: absolute; left: 0; right: 0; bottom: 0; box-sizing: border-box; min-height: 2px; border-top: 2px solid #82dfe4; background: #3d8a9080; }
  .mute .fill { background: #4a626b60; border-color: #667a81; }
  .mark { position: absolute; left: 0; top: 1px; border-top: 5px solid #f0a55a; border-right: 5px solid transparent; }
  .notes { position: absolute; left: 0; right: 0; bottom: 0; height: 7px; background: repeating-linear-gradient(90deg, #8a9550 0 1px, transparent 1px 10px); }
  .notes.dense { background: repeating-linear-gradient(90deg, #8a9550 0 2px, transparent 2px 4px); }
  .thin .bar { border-width: 0 1px; border-radius: 0; }
  .thin .body, .over .body { background: none; }
  .over .bar { visibility: hidden; }
  .tick { position: absolute; top: 0; bottom: 0; width: 2px; background: linear-gradient(#23878b 30px, #164850 30px); }
  .tick svg { position: absolute; left: 0; bottom: 0; width: 3px; height: 38px; fill: none; stroke: #86eef2; stroke-width: 1.2; }
  .mini i { position: absolute; top: 0; height: 6px; box-sizing: border-box; background: #268488; border: 1px solid #1a6a6e; border-radius: 2px; }
  .mini .grey { background: #565e66; border-color: #4a525a; }
</style>
